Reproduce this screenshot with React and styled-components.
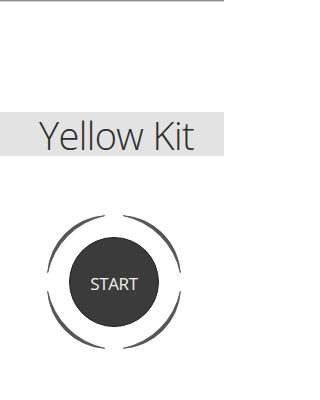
import React from "react";
import styled, { createGlobalStyle } from "styled-components";

const Global = createGlobalStyle`
  html, body { margin: 0; padding: 0; background: #ffffff; }
  body { font-family: "Open Sans", "Liberation Sans", sans-serif; }
`;

const Page = styled.div`
  width: 224px;
  height: 400px;
  display: flex;
  flex-direction: column;
  background: #ffffff;
  overflow: hidden;
`;

const TopRule = styled.div`
  height: 1px;
  background: #8f8f8f;
  border-bottom: 1px solid #d6d6d6;
`;

const TitleBand = styled.div`
  margin-top: 110px;
  height: 44px;
  background: #e3e3e3;
  display: flex;
  align-items: center;
  justify-content: center;
  padding-left: 9px;
`;

const Title = styled.h1`
  margin: 0;
  font-family: "Open Sans", sans-serif;
  font-weight: 300;
  font-size: 38px;
  line-height: 44px;
  color: #2e2e2e;
  letter-spacing: -0.6px;
  padding-top: 1px;
`;

const StartArea = styled.div`
  margin-top: 56px;
  display: flex;
  justify-content: center;
  padding-left: 4px;
`;

const Stack = styled.div`
  display: grid;
  width: 140px;
  height: 140px;
  & > * { grid-area: 1 / 1; }
  place-items: center;
`;

const Ring = styled.svg`
  width: 140px;
  height: 140px;
  display: block;
`;

const StartButton = styled.button`
  width: 90px;
  height: 90px;
  border-radius: 50%;
  background: #3b3b3b;
  border: 1px solid #1f1f1f;
  box-sizing: border-box;
  color: #f2f2f2;
  font-family: "Open Sans", sans-serif;
  font-weight: 400;
  font-size: 17px;
  letter-spacing: -0.4px;
  padding: 3px 0 0;
  cursor: pointer;
`;

const C = 70;
const R = 67;
const SPAN = 74;

function pt(r, deg) {
  const a = (deg * Math.PI) / 180;
  return [C + r * Math.cos(a), C + r * Math.sin(a)];
}

function crescent(mid) {
  const a1 = mid - SPAN / 2;
  const a2 = mid + SPAN / 2;
  const [x1, y1] = pt(R, a1);
  const [x2, y2] = pt(R, a2);
  const c = R * Math.sin(((SPAN / 2) * Math.PI) / 180);
  const s = R - Math.sqrt(R * R - c * c);
  const so = s + 1.6;
  const si = s - 1.6;
  const ro = (c * c + so * so) / (2 * so);
  const ri = (c * c + si * si) / (2 * si);
  return `M ${x1} ${y1} A ${ro} ${ro} 0 0 1 ${x2} ${y2} A ${ri} ${ri} 0 0 0 ${x1} ${y1} Z`;
}

const arcs = [-45, 45, 135, 225];

export default function App() {
  return (
    <Page>
      <Global />
      <TopRule />
      <TitleBand>
        <Title>Yellow Kit</Title>
      </TitleBand>
      <StartArea>
        <Stack>
          <Ring viewBox="0 0 140 140">
            {arcs.map((m) => (
              <path
                key={m}
                d={crescent(m)}
                fill="#555555"
                stroke="#555555"
                strokeWidth="0.8"
                strokeLinejoin="round"
              />
            ))}
          </Ring>
          <StartButton>START</StartButton>
        </Stack>
      </StartArea>
    </Page>
  );
}
